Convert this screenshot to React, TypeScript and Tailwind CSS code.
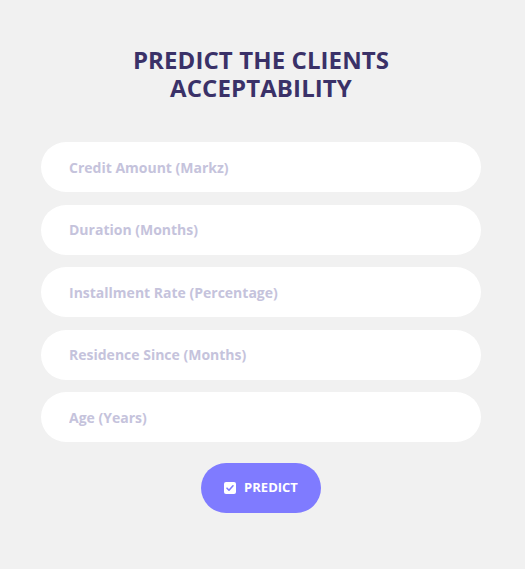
import React from 'react';

const fields = [
  "Credit Amount (Markz)",
  "Duration (Months)",
  "Installment Rate (Percentage)",
  "Residence Since (Months)",
  "Age (Years)",
];

export default function App() {
  return (
    <div className="min-h-[569px] w-full bg-[#f1f1f1] font-['Open_Sans',sans-serif]">
      <div className="ml-[41px] w-[440px] pt-[46px] flex flex-col items-center">
        <h1 className="text-center text-[24px] font-bold leading-[28px] text-[#3a3168] tracking-[0.1px]">
          <span className="block">PREDICT THE CLIENTS</span>
          <span className="block">ACCEPTABILITY</span>
        </h1>

        <form className="mt-[40px] w-full flex flex-col gap-[12.5px]" onSubmit={(e) => e.preventDefault()}>
          {fields.map((f) => (
            <input
              key={f}
              type="text"
              placeholder={f}
              className="h-[50px] w-full rounded-[25px] bg-white pl-[28px] text-[14px] font-bold text-[#3a3168] placeholder:text-[#c5c3dc] outline-none"
            />
          ))}

          <div className="flex justify-center mt-[8px]">
            <button type="submit" className="h-[50px] w-[120px] rounded-[25px] bg-[#7f7bff] text-white text-[13px] font-bold flex items-center justify-center gap-[8px]">
              <svg width="12" height="12" viewBox="0 0 12 12">
                <rect x="0" y="0" width="12" height="12" rx="2" fill="white" />
                <path d="M3 6.2 L5 8.2 L9 3.8" fill="none" stroke="#7f7bff" strokeWidth="1.6" strokeLinecap="round" strokeLinejoin="round" />
              </svg>
              PREDICT
            </button>
          </div>
        </form>
      </div>
    </div>
  );
}
